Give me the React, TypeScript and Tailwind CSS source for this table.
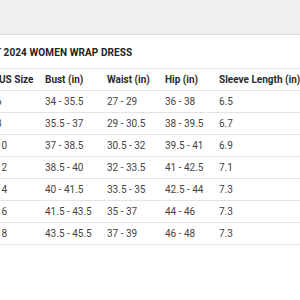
const COLUMNS = ['US Size', 'Bust (in)', 'Waist (in)', 'Hip (in)', 'Sleeve Length (in)']

// Size rows; the left column is partly cut off in the view.
const ROWS = [
  ['6', '34 - 35.5', '27 - 29', '36 - 38', '6.5'],
  ['8', '35.5 - 37', '29 - 30.5', '38 - 39.5', '6.7'],
  ['10', '37 - 38.5', '30.5 - 32', '39.5 - 41', '6.9'],
  ['12', '38.5 - 40', '32 - 33.5', '41 - 42.5', '7.1'],
  ['14', '40 - 41.5', '33.5 - 35', '42.5 - 44', '7.3'],
  ['16', '41.5 - 43.5', '35 - 37', '44 - 46', '7.3'],
  ['18', '43.5 - 45.5', '37 - 39', '46 - 48', '7.3'],
]

const GRID = 'grid grid-cols-[47px_62px_58px_54px_1fr]'

export default function App() {
  return (
    <div className="h-[300px] w-[300px] overflow-hidden bg-white font-['Roboto',sans-serif] text-[#333]">
      <div className="h-[35px] border-b border-[#dcdede] bg-[#eef0f1]" />

      <div className="ml-[-2px]">
        <div className="flex h-[34px] items-center border-b border-[#e3e5e5] pt-[2px]">
          <span className="ml-[-30px] whitespace-nowrap text-[10px] font-bold tracking-[0.1px] text-[#222]">CHART 2024 WOMEN WRAP DRESS</span>
        </div>

        <div className={`${GRID} h-[22px] items-center border-b border-[#e3e5e5] text-[10px] font-bold text-[#2b2b2b]`}>
          {COLUMNS.map((col, i) => (
            <div key={col} className={i === 0 ? 'ml-[1px] whitespace-nowrap' : 'whitespace-nowrap'}>
              {col}
            </div>
          ))}
        </div>

        {ROWS.map((row) => (
          <div key={row[0]} className={`${GRID} h-[22px] items-center border-b border-[#e3e5e5] text-[10px] text-[#444]`}>
            {row.map((cell, i) => (
              <div key={i} className={i === 0 ? 'ml-[-2px] whitespace-nowrap' : 'whitespace-nowrap'}>
                {cell}
              </div>
            ))}
          </div>
        ))}
      </div>
    </div>
  )
}
